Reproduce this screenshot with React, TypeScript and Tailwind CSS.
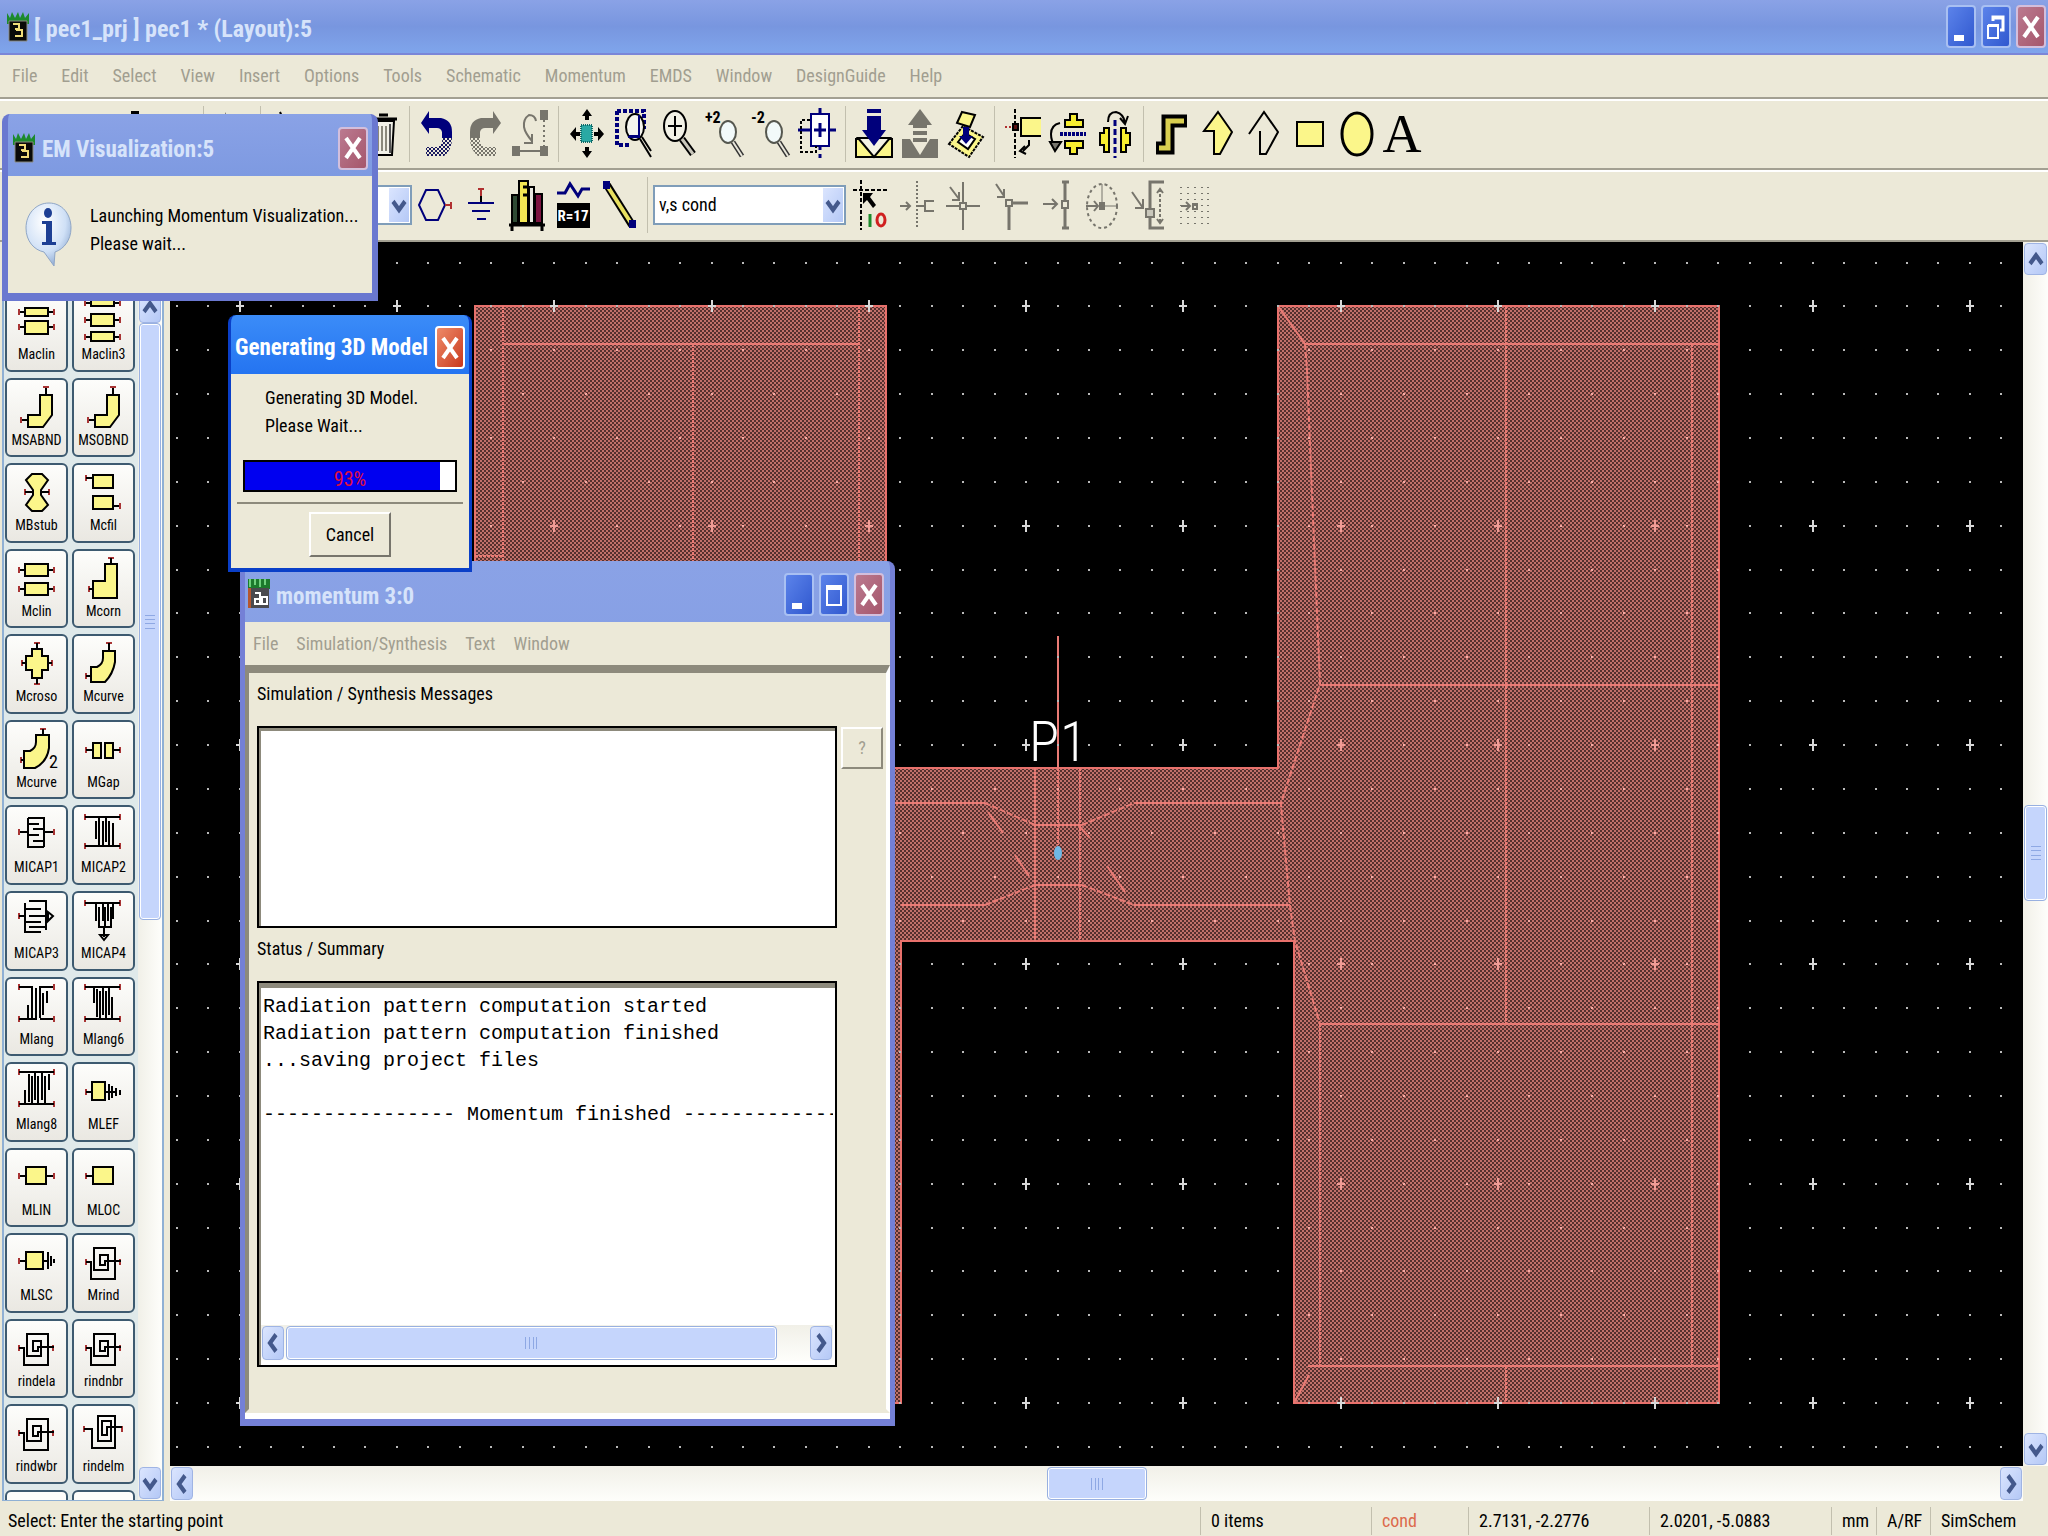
import React, { ReactNode } from 'react'
import clsx from 'clsx'

const MENU = [
  'File',
  'Edit',
  'Select',
  'View',
  'Insert',
  'Options',
  'Tools',
  'Schematic',
  'Momentum',
  'EMDS',
  'Window',
  'DesignGuide',
  'Help',
]

interface IPart {
  name: string
  fill?: string
  line?: string
  pin?: string
  text?: string
}

const PIN_L = 'M14 26v6M14 29h6'
const SPIRAL = 'M14 29h5v17h24V15H22v22h14V22h-8v10h5v-4h16'

const PARTS: IPart[] = [
  { name: 'Maclin', fill: 'M20 16h23v8h-23zM20 29h23v13h-23z', line: 'M15 20h5M43 20h5M15 35h5M43 35h5', pin: 'M14 17v6M49 17v6M14 32v6M49 32v6' },
  { name: 'Maclin3', fill: 'M19 6h23v8h-23zM19 22h23v12h-23zM19 40h23v9h-23z', line: 'M14 11h5M42 11h5M14 28h5M42 28h5M14 45h5M42 45h5', pin: 'M13 8v6M48 8v6M13 25v6M48 25v6M13 42v6M48 42v6' },
  { name: 'MSABND', fill: 'M35 17h12v20l-9 12h-15v-12h12z', line: 'M41 10v7M17 42h6', pin: 'M38 9h6M16 39v6' },
  { name: 'MSOBND', fill: 'M35 17h12v20l-9 12h-15v-12h12z', line: 'M41 10v7M17 42h6', pin: 'M38 9h6M16 39v6' },
  { name: 'MBstub', fill: 'M21 17l6-6h10l6 6-7 10v5l7 10-6 6h-10l-6-6 7-10v-5z', line: 'M20 29h8M36 29h8', pin: 'M20 26v6M44 26v6' },
  { name: 'Mcfil', fill: 'M21 12h20v13h-20zM21 33h20v13h-20z', line: 'M14 15h7M41 43h6', pin: 'M14 12v6M48 40v6' },
  { name: 'Mclin', fill: 'M20 15h23v12h-23zM20 34h23v12h-23z', line: 'M15 21h5M43 21h5M15 40h5M43 40h5', pin: 'M14 18v6M49 18v6M14 37v6M49 37v6' },
  { name: 'Mcorn', fill: 'M33 15h12v34h-24v-17h12z', line: 'M39 9v6M17 40h4', pin: 'M36 9h6M17 37v6' },
  { name: 'Mcroso', fill: 'M27 15h10v7h6v14h-6v8h-10v-8h-6v-14h6z', line: 'M32 9v6M32 44v6M17 29h4M43 29h4', pin: 'M29 9h6M29 50h6M17 26v6M47 26v6' },
  { name: 'Mcurve', fill: 'M31 17h12v11q-2 12-10 20h-14v-15h6q6-3 6-9z', line: 'M37 9v8M14 42h5', pin: 'M34 9h6M14 39v6' },
  { name: 'Mcurve', fill: 'M31 15h13v13q-2 14-14 20h-11v-17h6q6-3 6-9z', line: 'M38 9v6M16 40h3', pin: 'M35 9h6M16 37v6', text: '2' },
  { name: 'MGap', fill: 'M21 23h8v15h-8zM33 23h8v15h-8z', line: 'M14 30h7M41 30h7', pin: 'M14 27v6M48 27v6' },
  { name: 'MICAP1', line: 'M15 27h8M23 13v29h16M23 13h16v29M23 19h11M28 24h11v3h9M23 30h11M28 36h11', pin: 'M14 24v6M49 24v6' },
  { name: 'MICAP2', line: 'M13 12h35M13 41h35M24 16v18M27 12v29M31 16v24M34 12v25M37 16v24M41 18v23', pin: 'M13 9v6M48 9v6M13 38v6M48 38v6' },
  { name: 'MICAP3', line: 'M14 25h6M20 12v29h16M24 10h17v29M20 18h16M24 25h17M20 31h16M24 36h17M43 21l5 4-5 5z', pin: 'M14 22v6' },
  { name: 'MICAP4', line: 'M13 12h35M24 12v18M27 16v20h12v-20M31 12v18M33 16v20M36 12v18M41 12v16M32 36v10M28 44h8l-4 5z', pin: 'M13 9v6M48 9v6' },
  { name: 'Mlang', line: 'M14 10h13v31M14 42h17v-31M23 42v-14M48 10h-13v31M38 16v22M42 14v12M48 42h-13', pin: 'M14 7v6M49 7v6M14 39v6M49 39v6' },
  { name: 'Mlang6', line: 'M13 10h35M13 42h35M22 10v16M25 12v28M28 14v28M31 10v28M34 14v28M37 10v28M40 20v22', pin: 'M13 7v6M48 7v6M13 39v6M48 39v6' },
  { name: 'Mlang8', line: 'M14 10h35M14 42h35M20 42v-14M24 12v28M27 14v28M30 10v28M33 14v28M37 10v28M40 14v28M44 12v16', pin: 'M14 7v6M49 7v6M14 39v6M49 39v6' },
  { name: 'MLEF', fill: 'M20 20h13v18h-13z', line: 'M14 30h6M33 30h10M37 22v16M40 24v12M44 26v8M48 28v5', pin: 'M14 27v6' },
  { name: 'MLIN', fill: 'M21 19h20v17h-20z', line: 'M15 28h6M41 28h7', pin: 'M14 25v6M49 25v6' },
  { name: 'MLOC', fill: 'M21 19h20v17h-20z', line: 'M14 28h7', pin: 'M14 25v6' },
  { name: 'MLSC', fill: 'M21 19h17v17h-17z', line: 'M15 28h6M38 28h5M43 19v17M46 23v10M49 26v4', pin: 'M14 25v6' },
  { name: 'Mrind', line: SPIRAL, pin: PIN_L + 'M48 26v6' },
  { name: 'rindela', line: SPIRAL, pin: PIN_L + 'M48 26v6' },
  { name: 'rindnbr', line: SPIRAL, pin: PIN_L + 'M48 26v6' },
  { name: 'rindwbr', line: SPIRAL, pin: PIN_L + 'M48 26v6' },
  { name: 'rindelm', line: 'M12 25h8v19h23V12H26v25h13V17h-9v14h5v-8h15', pin: 'M12 22v6M50 22v6' },
]

const NAVY = '#00007b'
const GRAY = '#77756c'
const YELLOW = '#fbf68a'

/* Window chrome */

const AppIcon = () => (
  <svg width="24" height="34" viewBox="0 0 24 34" className="shrink-0">
    <path d="M1 14V3l3 5 2-6 3 6 3-6 2 6 3-6 2 6 4-5v11z" fill="#1c8a2c" />
    <path d="M3 11h18v20h-18z" fill="#0a0a08" stroke="#8a8a80" />
    <path d="M7 14h6v5h-4M10 20h6v6h-7" fill="none" stroke="#f0dc78" strokeWidth="2" />
  </svg>
)

const MomentumIcon = () => (
  <svg width="24" height="36" viewBox="0 0 24 36" className="shrink-0">
    <path d="M1 12V2h22v10z" fill="#1c7a2c" />
    <path d="M3 2v8M8 2v6M13 2v8M18 2v6" stroke="#6fd07c" strokeWidth="2" />
    <path d="M1 11h3v20h-3z" fill="#b5562e" />
    <path d="M4 11h18v20h-18z" fill="#4a4a4e" />
    <path d="M8 16h5v11h-5v-5h4M15 20h5v7h-5z" fill="none" stroke="#fff" strokeWidth="2" />
  </svg>
)

type Glyph = 'min' | 'max' | 'restore' | 'close'

const WinButton = ({ glyph, active }: { glyph: Glyph; active?: boolean }) => (
  <button
    type="button"
    aria-label={glyph}
    className={clsx(
      'flex h-[43px] w-[30px] shrink-0 items-center justify-center rounded border-2',
      glyph !== 'close' && 'border-[#a9c0f2] bg-linear-to-br from-[#5c83ea] to-[#3158cf]',
      glyph === 'close' && !active && 'border-[#d3bfdc] bg-linear-to-br from-[#bb7a90] to-[#a5566c]',
      glyph === 'close' && active && 'border-white bg-linear-to-br from-[#ee8a68] to-[#c8361a]'
    )}
  >
    <svg width="26" height="38" viewBox="0 0 26 38" fill="none" stroke="#fff">
      {glyph === 'min' && <path d="M6 27h10v6h-10z" fill="#fff" stroke="none" />}
      {glyph === 'max' && (
        <>
          <path d="M5 9h16v5h-16z" fill="#fff" stroke="none" />
          <path d="M6 12v17h14v-17" strokeWidth="2" />
        </>
      )}
      {glyph === 'restore' && (
        <>
          <path d="M10 13v-4h10v13h-3M9 10h12" strokeWidth="3" />
          <path d="M5 18h10v12h-10zM5 17h11" strokeWidth="2" />
        </>
      )}
      {glyph === 'close' && <path d="M6 9l14 20M20 9L6 29" strokeWidth="4" />}
    </svg>
  </button>
)

const INACTIVE_BAR = 'bg-linear-to-b from-[#8aa2e6] via-[#7896df] to-[#7fa5ec] text-[#d6e3fa]'

/* Scroll bars */

const CHEVRONS = {
  up: 'M4 14l6-7 6 7',
  down: 'M4 7l6 7 6-7',
  left: 'M13 3l-6 7 6 7',
  right: 'M7 3l6 7-6 7',
}

const Chevron = ({ dir }: { dir: keyof typeof CHEVRONS }) => (
  <svg width="20" height="24" viewBox="0 0 20 20" preserveAspectRatio="none">
    <path d={CHEVRONS[dir]} fill="none" stroke="#44598c" strokeWidth="4" />
  </svg>
)

const ScrollButton = ({ dir }: { dir: keyof typeof CHEVRONS }) => (
  <button
    type="button"
    aria-label={'scroll ' + dir}
    className={clsx(
      'flex shrink-0 items-center justify-center rounded-sm border border-[#9fb4e4] bg-linear-to-br from-[#dbe5fe] to-[#b4c8f6]',
      dir === 'up' || dir === 'down' ? 'h-8 w-full' : 'h-full w-[22px]'
    )}
  >
    <Chevron dir={dir} />
  </button>
)

interface IScrollBar {
  vertical?: boolean
  before: number
  size: number
  after: number
}

const ScrollBar = ({ vertical, before, size, after }: IScrollBar) => (
  <div
    className={clsx(
      'flex h-full w-full p-px from-[#f1f0e8] to-[#fefefb]',
      vertical ? 'flex-col bg-linear-to-r' : 'bg-linear-to-b'
    )}
  >
    <ScrollButton dir={vertical ? 'up' : 'left'} />
    <div style={{ flex: `${before} 0 0` }} />
    <div
      style={{ flex: `${size} 0 0` }}
      className="flex items-center justify-center rounded-sm border border-[#98b0e0] bg-[#c5d5fc] shadow-[inset_0_0_0_1px_white]"
    >
      <div className={clsx('flex justify-between', vertical ? 'h-[14px] w-2.5 flex-col' : 'h-3 w-3')}>
        {[0, 1, 2, 3].map((i) => (
          <span key={i} className={clsx('bg-[#8ea8e4]', vertical ? 'h-px w-full' : 'h-full w-px')} />
        ))}
      </div>
    </div>
    <div style={{ flex: `${after} 0 0` }} />
    <ScrollButton dir={vertical ? 'down' : 'right'} />
  </div>
)

/* Tool bars */

const Tool = ({ name, children }: { name: string; children: ReactNode }) => (
  <button type="button" aria-label={name} className="flex h-14 w-[46px] shrink-0 items-center justify-center">
    <svg width="42" height="52" viewBox="0 0 42 52" fill="none" stroke="#000" strokeWidth="2">
      {children}
    </svg>
  </button>
)

const Divider = () => <span className="mx-[5px] h-14 w-px shrink-0 bg-[#c2bfae]" />

const Combo = ({ label, value, className }: { label: string; value: string; className: string }) => (
  <div className={clsx('flex h-10 shrink-0 border-2 border-[#7f9db9] bg-white', className)}>
    <select aria-label={label} className="min-w-0 flex-1 appearance-none bg-white px-1 text-lg text-black outline-none">
      <option>{value}</option>
    </select>
    <span className="m-px flex w-5 items-center justify-center bg-linear-to-br from-[#dbe5fe] to-[#b4c8f6]">
      <Chevron dir="down" />
    </span>
  </div>
)

const Lens = ({ sign }: { sign: string }) => (
  <>
    <text x="1" y="15" fontSize="16" fontWeight="bold" fill="#000" stroke="none">
      {sign}
    </text>
    <ellipse cx="24" cy="24" rx="8" ry="11" fill="#f2fafa" stroke="#55574f" />
    <path d="M29 34l9 14" stroke="#333" strokeWidth="5" />
    <path d="M29 34l9 14" stroke="#e8e6da" strokeWidth="2" />
  </>
)

const TopTools = () => (
  <div className="flex items-center pl-3.5">
    <Tool name="New">
      <path d="M10 10h16l6 8v26h-22z" fill="#fff" />
    </Tool>
    <Tool name="Open">
      <path d="M5 16h12l4 5h16v21h-32z" fill={YELLOW} />
    </Tool>
    <Tool name="Save">
      <path d="M24 4h6v8h-6z" fill="#000" />
      <path d="M8 12h26v30h-26z" fill={NAVY} />
    </Tool>
    <Tool name="Print">
      <path d="M6 22h30v16h-30zM12 22v-10h18v10" fill="#fff" />
    </Tool>
    <Divider />
    <Tool name="Pointer">
      <path d="M14 4l16 28h-10l-6 8z" fill={GRAY} stroke="none" />
    </Tool>
    <Divider />
    <Tool name="Cut">
      <path d="M12 4l12 28M30 10l-14 22" />
    </Tool>
    <Tool name="Copy">
      <path d="M8 12h18v28h-18zM16 18h18v28h-18z" fill="#fff" />
    </Tool>
    <Tool name="Delete">
      <path d="M13 13h21l-2 34h-17z" fill="#f2f1e8" />
      <path d="M10 11h27M19 7h9" strokeWidth="3" />
      <path d="M18 18v25M22 18v25M26 18v25" stroke="#8a887c" />
      <path d="M30 16v29" stroke="#555" />
    </Tool>
    <Divider />
    <Tool name="Undo">
      <path d="M12 3v7h12q11 2 11 14v6h-10v-6q-1-4-5-4h-8v6L4 15z" fill={NAVY} stroke="none" />
      <path d="M35 30q0 12-8 18h-18v-9h12q5-3 4-9z" fill="url(#ditherNavy)" stroke="none" />
    </Tool>
    <Tool name="Redo">
      <path d="M30 3v7h-12q-11 2-11 14v6h10v-6q1-4 5-4h8v6l8-11z" fill={GRAY} stroke="none" />
      <path d="M7 30q0 12 8 18h18v-9h-12q-5-3-4-9z" fill="url(#ditherGray)" stroke="none" />
    </Tool>
    <Tool name="Align">
      <path d="M31 2h8v10h-8zM3 38h8v10h-8zM31 38h8v10h-8z" fill={GRAY} stroke="none" />
      <path d="M11 43h20" stroke={GRAY} />
      <path d="M35 12v26" stroke={GRAY} strokeDasharray="2 3" />
      <path d="M27 13q-1-6-7-6-6 4-5 12 1 6 8 14M23 26v9h-8" stroke={GRAY} />
    </Tool>
    <Divider />
    <Tool name="Pan">
      <path d="M15 17h11v17h-11z" fill="#2aa9a4" stroke="#0d6a68" strokeDasharray="1 1" />
      <path d="M21 1l5 7h-3v4h-4V8h-3zM21 50l5-7h-3v-4h-4v4h-3zM4 26l6-7v5h4v4h-4v5zM38 26l-6-7v5h-4v4h4v5z" fill="#000" stroke="none" />
    </Tool>
    <Tool name="Zoom area">
      <path d="M5 3h27v18M5 3v34h12" stroke={NAVY} strokeWidth="4" strokeDasharray="4 2" />
      <ellipse cx="23" cy="19" rx="9" ry="13" fill="#f5f5ee" />
      <path d="M27 7v22h-11M27 10v18h-10" stroke={NAVY} />
      <path d="M28 31l11 18M30 29l9 14" />
    </Tool>
    <Tool name="Zoom in">
      <ellipse cx="17" cy="18" rx="11" ry="15" fill="#f2f1e6" />
      <path d="M17 8v20M10 18h14" />
      <path d="M24 31l11 15" strokeWidth="7" />
      <path d="M24 31l11 15" stroke="#c9c7bb" strokeWidth="3" />
    </Tool>
    <Tool name="Zoom in by 2">
      <Lens sign="+2" />
    </Tool>
    <Tool name="Zoom out by 2">
      <Lens sign="-2" />
    </Tool>
    <Tool name="View all">
      <path d="M15 6h18v32h-18z" fill="#fff" stroke={NAVY} />
      <path d="M24 0v6M24 38v4M24 46v4M24 15v14M18 22h12M2 22h13M33 22h7" stroke={NAVY} strokeWidth="3" />
      <path d="M14 12h-9v32h15v-6" strokeDasharray="3 2" />
    </Tool>
    <Divider />
    <Tool name="Push">
      <path d="M3 31h36v18h-36z" fill={YELLOW} />
      <path d="M5 30l16 19 16-19z" fill="#f4f2e4" />
      <path d="M14 1h14v4h-14zM14 8h14v14h5L21 38 9 22h5z" fill={NAVY} stroke="none" />
    </Tool>
    <Tool name="Pop">
      <path d="M3 31h8l10 16 10-16h8v19h-36zM21 1l12 16h-5v3h-14v-3h-5zM14 23h14v4h-14zM14 30h14v4h-14z" fill={GRAY} stroke="none" />
    </Tool>
    <Tool name="Layer">
      <path d="M4 36l14-18 20 11-14 20z" fill={YELLOW} strokeDasharray="3 1" />
      <path d="M17 4l13 3-5 12-13-4z" fill={YELLOW} />
      <path d="M13 34l7-9 10 6-7 10z" fill="#fff" />
      <path d="M18 19h6v9h4l-7 8-7-8h4z" fill={NAVY} stroke="none" />
    </Tool>
    <Divider />
    <Tool name="Rotate">
      <path d="M13 1v49" strokeDasharray="4 2" />
      <path d="M3 19h8" stroke="#b03030" strokeDasharray="2 2" />
      <path d="M39 10h-20v18h20" fill={YELLOW} />
      <path d="M11 16h5v6h-5z" fill="#5a1010" />
      <path d="M27 32v5l-6 6M23 38l-5 5 6 3" />
    </Tool>
    <Tool name="Mirror Y">
      <path d="M17 19v-7h5v-6h7v6h6v7zM17 33v7h5v6h7v-6h6v-7z" fill="#f7ee30" />
      <path d="M12 26h26" stroke={NAVY} strokeWidth="4" strokeDasharray="3 1" />
      <path d="M12 15q-9 2-9 11 0 7 4 12" />
      <path d="M2 34h11l-6 9z" fill={GRAY} />
    </Tool>
    <Tool name="Mirror X">
      <path d="M15 20h-5v5h-4v12h4v7h5zM27 20h5v5h4v12h-4v7h-5z" fill="#f7ee30" />
      <path d="M21 12v38" stroke={NAVY} strokeWidth="3" strokeDasharray="6 3" />
      <path d="M14 14q0-10 8-10 8 2 9 11M26 10l5 6 3-8" />
    </Tool>
    <Divider />
    <Tool name="Path">
      <path d="M5 40h12V13h19" strokeWidth="13" strokeLinecap="butt" />
      <path d="M8 40h9V13h16" stroke="#d9cf50" strokeWidth="5" />
    </Tool>
    <Tool name="Polygon">
      <path d="M21 4l14 20-12 22h-6v-23h-10z" fill={YELLOW} />
    </Tool>
    <Tool name="Polyline">
      <path d="M6 26L21 4l14 20-12 22h-6v-23" />
    </Tool>
    <Tool name="Rectangle">
      <path d="M8 14h26v24h-26z" fill={YELLOW} />
    </Tool>
    <Tool name="Circle">
      <ellipse cx="22" cy="26" rx="15" ry="21" fill={YELLOW} strokeWidth="3" />
    </Tool>
    <button type="button" aria-label="Text" className="flex h-14 w-[46px] items-center justify-center font-['Liberation_Serif',serif] text-[54px] text-black">
      A
    </button>
  </div>
)

const BottomTools = () => (
  <div className="flex items-center pl-3.5">
    <Combo label="Palette" value="TLines-Microstrip" className="w-[398px]" />
    <Tool name="Port">
      <path d="M12 11h12l7 15-7 15h-12l-7-15z" stroke={NAVY} />
      <path d="M31 26h6M37 23v7" stroke="#b03030" />
    </Tool>
    <Tool name="Ground">
      <path d="M21 14v9" />
      <path d="M18 10h6M21 10v7" stroke="#b03030" />
      <path d="M8 24h26M12 32h18M17 40h9" stroke={NAVY} />
    </Tool>
    <Tool name="Library">
      <path d="M6 16h6v28h-6z" fill="#2e4a34" />
      <path d="M13 2h9v42h-9z" fill="#f2e653" />
      <path d="M23 8h5v36h-5z" fill="#e8e8e0" />
      <path d="M29 15h7v29h-7z" fill="#7c1440" />
      <path d="M3 46h36M6 46v6M36 46v6M17 8h5M17 16h5" strokeWidth="3" />
    </Tool>
    <Tool name="Variable">
      <path d="M5 14h8l5-9 8 12 4-7h8" stroke={NAVY} strokeWidth="3" />
      <path d="M5 24h33v25h-33z" fill="#000" stroke="none" />
      <text x="21" y="42" fontSize="15" fontWeight="bold" textAnchor="middle" fill="#fff" stroke="none">
        R=17
      </text>
    </Tool>
    <Tool name="Wire">
      <path d="M9 6l25 40" stroke="#000" strokeWidth="8" />
      <path d="M10 8l23 36" stroke="#e8e060" strokeWidth="4" />
      <path d="M6 3h5v6h-5zM32 42h5v6h-5z" fill={NAVY} stroke={NAVY} />
    </Tool>
    <Divider />
    <Combo label="Layer" value="v,s cond" className="mr-0.5 w-[193px]" />
    <Tool name="Snap">
      <path d="M11 1v50M3 11h34" strokeDasharray="4 2" />
      <path d="M13 14h10l-3 4 6 8-3 3-6-8-4 4z" fill="#000" stroke="none" />
      <path d="M20 35v13" stroke="#1c8a2c" strokeWidth="3" />
      <ellipse cx="31" cy="41" rx="4" ry="6" stroke="#d02020" strokeWidth="3" />
    </Tool>
    <Tool name="Snap pin">
      <path d="M4 27h10M10 23l4 4-4 4M21 27h8M38 22h-9v10h9" stroke={GRAY} />
      <path d="M21 2v48" stroke={GRAY} strokeDasharray="2 2" />
    </Tool>
    <Tool name="Snap vertex">
      <path d="M21 3v48M4 27h34M8 8l9 12M17 13v8h-7" stroke={GRAY} />
      <path d="M18 24h6v6h-6z" fill="#ece9d8" stroke={GRAY} />
    </Tool>
    <Tool name="Snap corner">
      <path d="M21 24v27M21 24h19" stroke={GRAY} strokeWidth="3" />
      <path d="M8 5l8 12M16 10v8h-7" stroke={GRAY} />
      <path d="M18 21h6v6h-6z" fill="#ece9d8" stroke={GRAY} />
    </Tool>
    <Tool name="Snap edge">
      <path d="M31 3v46M28 3h7M28 49h7" stroke={GRAY} strokeWidth="3" />
      <path d="M9 25h14M18 20l5 5-5 5" stroke={GRAY} />
      <path d="M28 22h6v7h-6z" fill="#ece9d8" stroke={GRAY} />
    </Tool>
    <Tool name="Snap centre">
      <ellipse cx="22" cy="27" rx="15" ry="22" stroke={GRAY} strokeDasharray="3 3" />
      <path d="M22 5v22h15" stroke={GRAY} strokeWidth="1" />
      <path d="M6 27h12M14 22l4 5-4 5" stroke={GRAY} />
      <path d="M20 24h4v6h-4z" fill={GRAY} stroke={GRAY} />
    </Tool>
    <Tool name="Snap midpoint">
      <path d="M38 3h-14v46h14" stroke={GRAY} strokeWidth="3" />
      <path d="M6 13l11 16M17 20v9h-8M31 14l3-4 3 4M31 40l3 4 3-4" stroke={GRAY} />
      <path d="M34 10v34" stroke={GRAY} strokeDasharray="3 2" />
      <path d="M20 30h8v8h-8z" fill="#c9c7bb" stroke={GRAY} />
    </Tool>
    <Tool name="Snap grid">
      <path d="M9 8v42M16 8v42M23 8v42M30 8v42M36 8v42" stroke={GRAY} strokeDasharray="1 5" />
      <path d="M9 27h9M14 23l4 4-4 4" stroke={GRAY} />
      <path d="M21 25h4v5h-4z" stroke={GRAY} />
    </Tool>
  </div>
)

/* Component palette */

const PartButton = ({ part }: { part: IPart }) => (
  <button
    type="button"
    className="flex min-h-0 flex-col items-center overflow-hidden rounded-md border-2 border-[#3d5a70] bg-linear-to-b from-[#fdfdfb] to-[#eae8e2] text-sm leading-4 text-black"
  >
    <svg width="62" height="52" viewBox="1 2 62 52" fill="none" stroke="#000" strokeWidth="2" className="shrink-0">
      {part.pin && <path d={part.pin} stroke="#a83434" />}
      {part.line && <path d={part.line} />}
      {part.fill && <path d={part.fill} fill="#fbf68a" />}
      {part.text && (
        <text x="44" y="48" fontSize="18" fill="#000" stroke="none">
          {part.text}
        </text>
      )}
    </svg>
    <span>{part.name}</span>
  </button>
)

const Palette = () => (
  <aside className="flex w-[170px] shrink-0 flex-col pr-1.5 pl-0.5 pt-12">
    <div className="flex min-h-0 flex-1 border-x-2 border-b border-[#8fb0d4] bg-[#dfe9ea]">
      <div className="flex min-w-0 flex-1 flex-col px-px pt-0.5">
        <div className="grid flex-1 auto-rows-fr grid-cols-2 gap-x-1 gap-y-1.5">
          {PARTS.map((part, i) => (
            <PartButton key={i} part={part} />
          ))}
        </div>
        <div className="mt-1.5 grid h-2.5 grid-cols-2 gap-x-1 overflow-hidden">
          {[0, 1].map((i) => (
            <span key={i} className="h-10 rounded-md border-2 border-[#3d5a70] bg-[#fdfdfb]" />
          ))}
        </div>
      </div>
      <div className="ml-0.5 w-6">
        <ScrollBar vertical before={0} size={596} after={547} />
      </div>
    </div>
  </aside>
)

/* Layout drawing: five minor dots per cross in both directions */

const OUTLINE = 'M475 306H886V768H1278V306H1719V1403H1294V941H901V1403H475Z'

const inMetal = (x: number, y: number) =>
  (x > 475 && x < 886 && y > 306 && y < 1403) ||
  (x > 860 && x < 1294 && y > 768 && y < 941) ||
  (x > (y < 768 ? 1278 : 1294) && x < 1719 && y > 308 && y < 1400)

const dots: { x: number; y: number; metal: boolean }[] = []
const crosses: { x: number; y: number; metal: boolean }[] = []
for (let j = 0; j < 28; j++) {
  for (let i = -37; i < 22; i++) {
    const x = Math.round(1340.7 + i * 31.46)
    const y = Math.round(262.6 + j * 43.86)
    const metal = inMetal(x, y)
    if (i % 5 === 0 && j % 5 === 1) crosses.push({ x, y, metal })
    else if (!metal || (i + j) % 2 !== 0) dots.push({ x, y, metal })
  }
}

const Drawing = () => (
  <svg className="h-full w-full" viewBox="170 242 1853 1224" preserveAspectRatio="xMinYMin slice">
    <defs>
      <pattern id="hatch" width="4" height="4" patternUnits="userSpaceOnUse">
        <path d="M0 0h4v4h-4z" fill="#55302e" />
        <path d="M0 0h2v2h-2zM2 2h2v2h-2z" fill="#c2716b" />
      </pattern>
    </defs>
    <path d="M170 242h1853v1224h-1853z" fill="#000" />
    <path d={OUTLINE} fill="url(#hatch)" stroke="#e8716c" strokeWidth="2" />
    <g fill="none" stroke="#ea7b75" strokeWidth="2">
      <path d="M503 344H859M1278 306l27 38H1719M1320 685H1719M1320 1024H1719M1308 1366H1719M1294 1403l15-28" />
      <path d="M895 803H985M1134 803H1281M901 905H985M1134 905H1290M1035 825H1082M1035 885H1082" />
      <path d="M988 812l15 21M1015 855l14 21M1079 826l11 12M1107 866l18 26" />
      <path d="M1058 636V768" />
      <path
        strokeDasharray="3 1"
        d="M503 306V1403M693 344V1403M859 306V1403M475 556h28M1506 306V1024M1506 1366v37M1692 344V1366M1320 1024V1366M1035 768V941M1080 768V941M1058 768V845"
      />
      <path
        strokeDasharray="6 2"
        d="M1305 344l2 26 4 100 9 214-37 113-2 8 9 101 5 35 25 83M985 803l50 22M1082 825l52-22M985 905l50-20M1082 885l52 20"
      />
    </g>
    {dots.map(({ x, y, metal }) => (
      <path key={x + '-' + y} d={`M${x - 1} ${y - 1}h2v2h-2z`} fill={metal ? '#f5aaa4' : '#b9b9b9'} />
    ))}
    {crosses.map(({ x, y, metal }) => (
      <path
        key={x + '+' + y}
        d={`M${x - 4} ${y}h8M${x} ${y - 6}v12`}
        stroke={metal ? '#f09c96' : '#d8d8d8'}
        strokeWidth="2"
      />
    ))}
    <ellipse cx="1058" cy="853" rx="4" ry="7" fill="#6fb9e6" />
    <g fill="#fff" className="font-['Roboto_Condensed',sans-serif] font-light" fontSize="56">
      <text x="1029" y="761">
        P
      </text>
      <text x="1060" y="761">
        1
      </text>
    </g>
  </svg>
)

/* Floating windows */

const Visualization = () => (
  <section className={clsx('absolute top-[114px] left-0.5 flex w-[376px] flex-col rounded-t-lg border-x-[6px] border-b-8 border-[#6a78d0]', INACTIVE_BAR)}>
    <header className="flex h-[62px] items-center gap-1.5 px-1 pt-1.5">
      <AppIcon />
      <h2 className="flex-1 pt-1 text-[23px] font-bold">EM Visualization:5</h2>
      <WinButton glyph="close" />
    </header>
    <div className="flex h-[117px] gap-4 bg-[#ece9d8] px-4 pt-6 leading-7 text-black">
      <svg width="50" height="68" viewBox="0 0 50 68" className="shrink-0">
        <defs>
          <radialGradient id="bubble" cx="0.4" cy="0.3" r="0.8">
            <stop offset="0" stopColor="#fff" />
            <stop offset="0.6" stopColor="#cfe0f6" />
            <stop offset="1" stopColor="#7d9cc8" />
          </radialGradient>
        </defs>
        <path d="M25 3c13 0 22 11 22 25 0 12-7 21-16 24l-1 14-10-14C10 50 2 41 2 28 2 14 12 3 25 3z" fill="url(#bubble)" stroke="#8fa6c6" />
        <ellipse cx="24" cy="13" rx="4" ry="5" fill="#1d3f94" />
        <path d="M18 21h10v21h4v3h-14v-3h4v-18h-4z" fill="#1d3f94" />
      </svg>
      <p className="pt-0.5 whitespace-nowrap">
        Launching Momentum Visualization...
        <br />
        Please wait...
      </p>
    </div>
  </section>
)

const Generating = () => (
  <section className="absolute top-[315px] left-[228px] flex w-[244px] flex-col rounded-t-lg border-x-[3px] border-b-4 border-[#0a3fc8] bg-linear-to-b from-[#3b8cf8] via-[#0a56e8] to-[#0a62f4]">
    <header className="flex h-[59px] items-center justify-between pt-1.5 pr-1 pl-1">
      <h2 className="text-[23px] font-bold whitespace-nowrap text-white">Generating 3D Model</h2>
      <WinButton glyph="close" active />
    </header>
    <div className="flex h-[194px] flex-col bg-[#ece9d8] px-1.5 pt-2.5 leading-7 text-black">
      <p className="pl-7">
        Generating 3D Model.
        <br />
        Please Wait...
      </p>
      <div className="relative mx-1.5 mt-5 flex h-8 items-center justify-center border-2 border-black bg-white" role="progressbar" aria-valuenow={93}>
        <span className="absolute inset-y-0 left-0 bg-[#0000f0]" style={{ width: '93%' }} />
        <span className="relative pt-1.5 text-xl text-[#e0103c]">93%</span>
      </div>
      <hr className="mt-2.5 border-t-2 border-[#8d8a7c]" />
      <button type="button" className="mx-auto mt-2 h-[45px] w-[82px] border-2 border-t-white border-r-[#77756c] border-b-[#77756c] border-l-white">
        Cancel
      </button>
    </div>
  </section>
)

const LOG = `Radiation pattern computation started
Radiation pattern computation finished
...saving project files

---------------- Momentum finished ----------------`

const Momentum = () => (
  <section className={clsx('absolute top-[561px] left-60 flex w-[655px] flex-col rounded-t-lg border-x-[5px] border-b-[7px] border-[#7480d6]', INACTIVE_BAR)}>
    <header className="flex h-[61px] items-center gap-[5px] pt-1.5 pr-1.5 pl-0.5">
      <MomentumIcon />
      <h2 className="flex-1 pt-1 text-[23px] font-bold">momentum 3:0</h2>
      <WinButton glyph="min" />
      <WinButton glyph="max" />
      <WinButton glyph="close" />
    </header>
    <div className="border-b-[6px] border-white bg-[#ece9d8] text-black">
      <nav className="flex h-[43px] items-center gap-[18px] px-2 text-[#a19e90]">
        {['File', 'Simulation/Synthesis', 'Text', 'Window'].map((item) => (
          <button key={item} type="button">
            {item}
          </button>
        ))}
      </nav>
      <div className="flex h-[748px] gap-1 border-4 border-t-[8px] border-t-[#8d8a7c] border-r-white border-b-transparent border-l-[#8d8a7c] pl-2">
        <div className="flex w-[580px] flex-col">
          <label htmlFor="messages" className="flex h-[53px] items-center pb-3">
            Simulation / Synthesis Messages
          </label>
          <textarea
            id="messages"
            readOnly
            className="h-[202px] resize-none border-2 border-black bg-white shadow-[inset_2px_3px_0_#8d8a7c] outline-none"
          />
          <label htmlFor="summary" className="flex h-[53px] items-center pb-3">
            Status / Summary
          </label>
          <div className="flex h-[386px] flex-col border-2 border-black bg-white px-0.5 pt-2.5 pb-1 shadow-[inset_2px_5px_0_#8d8a7c]">
            <textarea
              id="summary"
              readOnly
              wrap="off"
              value={LOG}
              className="ml-0.5 flex-1 resize-none overflow-hidden bg-white font-['Liberation_Mono',monospace] text-xl leading-[27px] whitespace-pre outline-none"
            />
            <div className="h-9">
              <ScrollBar before={2} size={486} after={33} />
            </div>
          </div>
        </div>
        <button type="button" className="mt-[54px] h-[42px] w-[42px] border-2 border-t-white border-r-[#8d8a7c] border-b-[#8d8a7c] border-l-white text-[#a19e90]">
          ?
        </button>
      </div>
    </div>
  </section>
)

const STATUS = [
  { text: '0 items', className: 'w-[171px]' },
  { text: 'cond', className: 'w-[97px] text-[#dc6a4c]' },
  { text: '2.7131, -2.2776', className: 'w-[181px]' },
  { text: '2.0201, -5.0883', className: 'w-[182px]' },
  { text: 'mm', className: 'w-[45px]' },
  { text: 'A/RF', className: 'w-[54px]' },
  { text: 'SimSchem', className: 'w-[118px]' },
]

const RULE = 'border-b-2 border-[#a3a092] shadow-[0_2px_0_#fff]'

export default function App() {
  return (
    <div className="relative flex h-screen flex-col overflow-hidden bg-[#ece9d8] font-['Roboto_Condensed','Liberation_Sans_Narrow','Arial_Narrow',sans-serif] text-lg">
      <svg width="0" height="0" className="absolute">
        <defs>
          <pattern id="ditherNavy" width="4" height="4" patternUnits="userSpaceOnUse">
            <path d="M0 0h2v2h-2zM2 2h2v2h-2z" fill="#1a1a60" />
          </pattern>
          <pattern id="ditherGray" width="4" height="4" patternUnits="userSpaceOnUse">
            <path d="M0 0h2v2h-2zM2 2h2v2h-2z" fill={GRAY} />
          </pattern>
        </defs>
      </svg>
      <header className={clsx('flex h-[55px] shrink-0 items-center gap-1 border-b-2 border-[#7a86d8] pl-1.5', INACTIVE_BAR)}>
        <AppIcon />
        <h1 className="flex-1 pt-1 text-2xl font-bold">[ pec1_prj ] pec1 * (Layout):5</h1>
        <div className="flex gap-[5px] pr-0.5">
          <WinButton glyph="min" />
          <WinButton glyph="restore" />
          <WinButton glyph="close" />
        </div>
      </header>
      <nav className={clsx('flex h-11 shrink-0 items-center text-[#a19e90]', RULE)}>
        {MENU.map((item) => (
          <button key={item} type="button" className="px-3">
            {item}
          </button>
        ))}
      </nav>
      <div className={clsx('flex h-[71px] shrink-0 items-center', RULE)}>
        <TopTools />
      </div>
      <div className="flex h-[72px] shrink-0 items-center border-b-2 border-[#a3a092]">
        <BottomTools />
      </div>
      <main className="flex min-h-0 flex-1">
        <Palette />
        <div className="flex min-w-0 flex-1 flex-col">
          <div className="flex min-h-0 flex-1">
            <div className="min-w-0 flex-1 bg-black">
              <Drawing />
            </div>
            <div className="w-[25px]">
              <ScrollBar vertical before={530} size={95} after={532} />
            </div>
          </div>
          <div className="h-[35px] pr-[25px]">
            <ScrollBar before={854} size={99} after={853} />
          </div>
        </div>
      </main>
      <footer className="flex h-[35px] shrink-0 items-center pt-1 text-black">
        <p className="flex-1 pl-2">Select: Enter the starting point</p>
        {STATUS.map(({ text, className }) => (
          <span key={text} className={clsx('border-l border-[#c2bfae] pl-2.5 whitespace-nowrap', className)}>
            {text}
          </span>
        ))}
      </footer>
      <Momentum />
      <Generating />
      <Visualization />
    </div>
  )
}
